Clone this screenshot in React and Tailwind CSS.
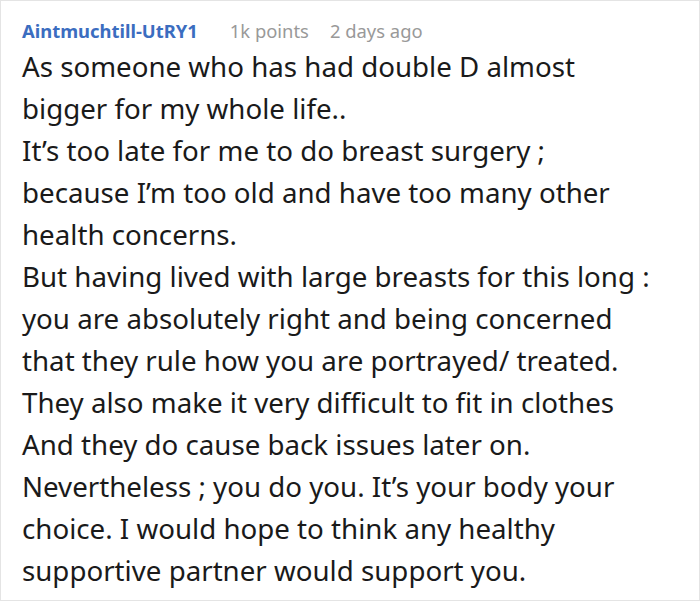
export default function App() {
    return (
        <div className="w-[700px] h-[601px] border border-[#e4e4e4] bg-white pl-[21px] pt-[16px] overflow-hidden" style={{ fontFamily: '"Noto Sans", "Open Sans", sans-serif' }}>
            <div className="flex items-center gap-[32px] text-[18.4px] leading-[28px]">
                <span className="font-bold text-[#3b6dc0]">Aintmuchtill-UtRY1</span>
                <div className="flex items-center gap-[21px] text-[#999999]">
                    <span>1k points</span>
                    <span>2 days ago</span>
                </div>
            </div>
            <p className="text-[27.7px] leading-[42px] text-[#1a1a1a] w-[670px]">
                As someone who has had double D almost<br />
                bigger for my whole life..<br />
                It’s too late for me to do breast surgery ;<br />
                because I’m too old and have too many other<br />
                health concerns.<br />
                But having lived with large breasts for this long :<br />
                you are absolutely right and being concerned<br />
                that they rule how you are portrayed/ treated.<br />
                They also make it very difficult to fit in clothes<br />
                And they do cause back issues later on.<br />
                Nevertheless ; you do you. It’s your body your<br />
                choice. I would hope to think any healthy<br />
                supportive partner would support you.
            </p>
        </div>
    );
}
